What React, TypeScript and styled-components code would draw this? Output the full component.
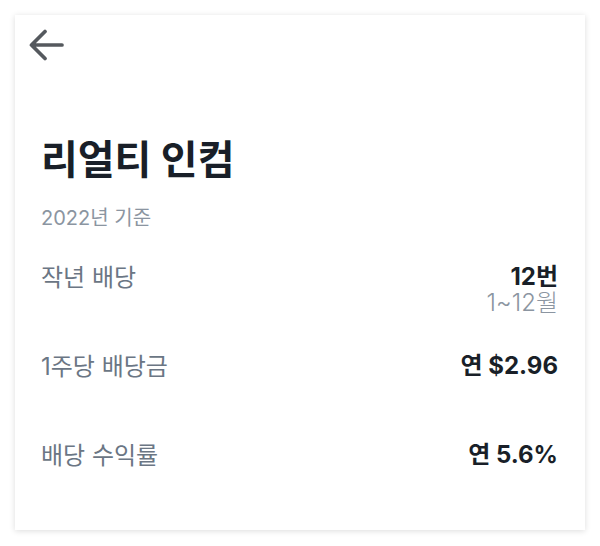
import styled, { createGlobalStyle } from 'styled-components';

const GlobalStyle = createGlobalStyle`
  html, body {
    margin: 0;
    padding: 0;
    background: #ffffff;
  }
  body {
    font-family: Inter, 'Noto Sans CJK KR', 'Noto Sans', sans-serif;
    -webkit-font-smoothing: antialiased;
  }
`;

const Page = styled.div`
  padding: 15px;
`;

const Card = styled.div`
  box-sizing: border-box;
  width: 570px;
  height: 515px;
  background: #ffffff;
  box-shadow: 0 1px 6px rgba(0, 0, 0, 0.14);
  padding: 14px 27px 0 26px;
  display: flex;
  flex-direction: column;
`;

const BackButton = styled.button`
  width: 36px;
  height: 32px;
  margin-left: -13px;
  padding: 0;
  border: none;
  background: none;
  display: flex;
`;

const Title = styled.h1`
  margin: 75px 0 0;
  font-size: 40px;
  font-weight: 700;
  line-height: 48px;
  color: #191f28;
`;

const Basis = styled.div`
  margin-top: 21px;
  font-size: 20px;
  line-height: 26px;
  color: #8b95a1;
`;

const List = styled.div`
  margin-top: 32px;
  display: flex;
  flex-direction: column;
`;

const Row = styled.div`
  height: 89px;
  display: flex;
  justify-content: space-between;
  align-items: flex-start;
`;

const Label = styled.div`
  font-size: 24px;
  line-height: 30px;
  color: #6b7684;
`;

const Values = styled.div`
  display: flex;
  flex-direction: column;
  align-items: flex-end;
  padding-top: 1px;
`;

const Value = styled.div`
  font-size: 24px;
  line-height: 26px;
  font-weight: 700;
  color: #191f28;
`;

const SubValue = styled.div`
  font-size: 24px;
  line-height: 26px;
  font-weight: 300;
  color: #8b95a1;
`;

const rows = [
  { label: '작년 배당', value: '12번', sub: '1~12월' },
  { label: '1주당 배당금', value: '연 $2.96' },
  { label: '배당 수익률', value: '연 5.6%' },
];

export default function App() {
  return (
    <>
      <GlobalStyle />
      <Page>
        <Card>
          <BackButton aria-label="뒤로">
            <svg width="36" height="32" viewBox="0 0 36 32" fill="none">
              <path
                d="M34 16H4M17 2.5L3.5 16L17 29.5"
                stroke="#55595e"
                strokeWidth="3.7"
                strokeLinecap="round"
                strokeLinejoin="round"
              />
            </svg>
          </BackButton>
          <Title>리얼티 인컴</Title>
          <Basis>2022년 기준</Basis>
          <List>
            {rows.map((r) => (
              <Row key={r.label}>
                <Label>{r.label}</Label>
                <Values>
                  <Value>{r.value}</Value>
                  {r.sub && <SubValue>{r.sub}</SubValue>}
                </Values>
              </Row>
            ))}
          </List>
        </Card>
      </Page>
    </>
  );
}
